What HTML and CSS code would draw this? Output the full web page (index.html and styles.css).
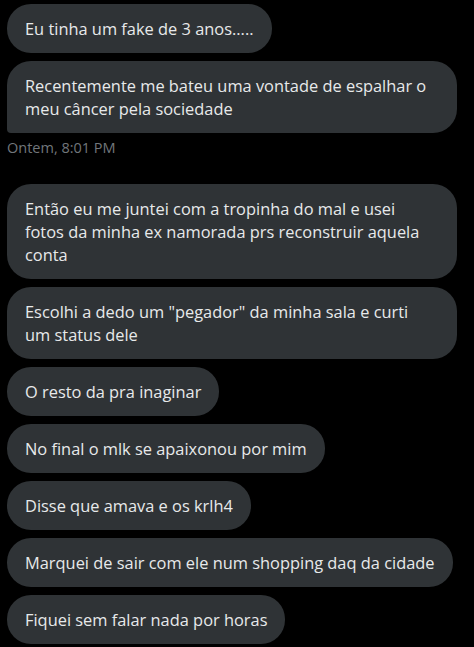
FILE: index.html
```html
<!DOCTYPE html>
<html lang="pt">
<head>
    <meta charset="UTF-8">
    <meta name="viewport" content="width=device-width, initial-scale=1.0">
    <title>Mensagens</title>
    <link rel="stylesheet" href="styles.css">
</head>
<body>
    <main class="chat">
        <div class="group">
            <div class="bubble">Eu tinha um fake de 3 anos.....</div>
            <div class="bubble wide last">Recentemente me bateu uma vontade de espalhar o meu câncer pela sociedade</div>
            <div class="time">Ontem, 8:01 PM</div>
        </div>

        <div class="group">
            <div class="bubble wide">Então eu me juntei com a tropinha do mal e usei<br>fotos da minha ex namorada prs reconstruir aquela<br>conta</div>
            <div class="bubble wide">Escolhi a dedo um "pegador" da minha sala e curti<br>um status dele</div>
            <div class="bubble">O resto da pra inaginar</div>
            <div class="bubble">No final o mlk se apaixonou por mim</div>
            <div class="bubble">Disse que amava e os krlh4</div>
            <div class="bubble">Marquei de sair com ele num shopping daq da cidade</div>
            <div class="bubble">Fiquei sem falar nada por horas</div>
        </div>
    </main>
</body>
</html>
```

FILE: styles.css
```css
body {
    margin: 0;
    background-color: #000;
    font-family: "Open Sans", "Noto Sans", Arial, sans-serif;
    color: #e7e9ea;
}
.chat {
    padding: 4px 17px 0 7px;
}
.group {
    display: flex;
    flex-direction: column;
    align-items: flex-start;
    gap: 8px;
}
.group + .group {
    margin-top: 27px;
}
.bubble {
    background-color: #2f3336;
    border-radius: 24px;
    padding: 13px 18px;
    font-size: 16.4px;
    line-height: 23px;
}
.bubble.wide {
    align-self: stretch;
}
.bubble.last {
    border-bottom-left-radius: 4px;
}
.time {
    margin-top: -3px;
    font-size: 14.5px;
    color: #71767b;
}
```
